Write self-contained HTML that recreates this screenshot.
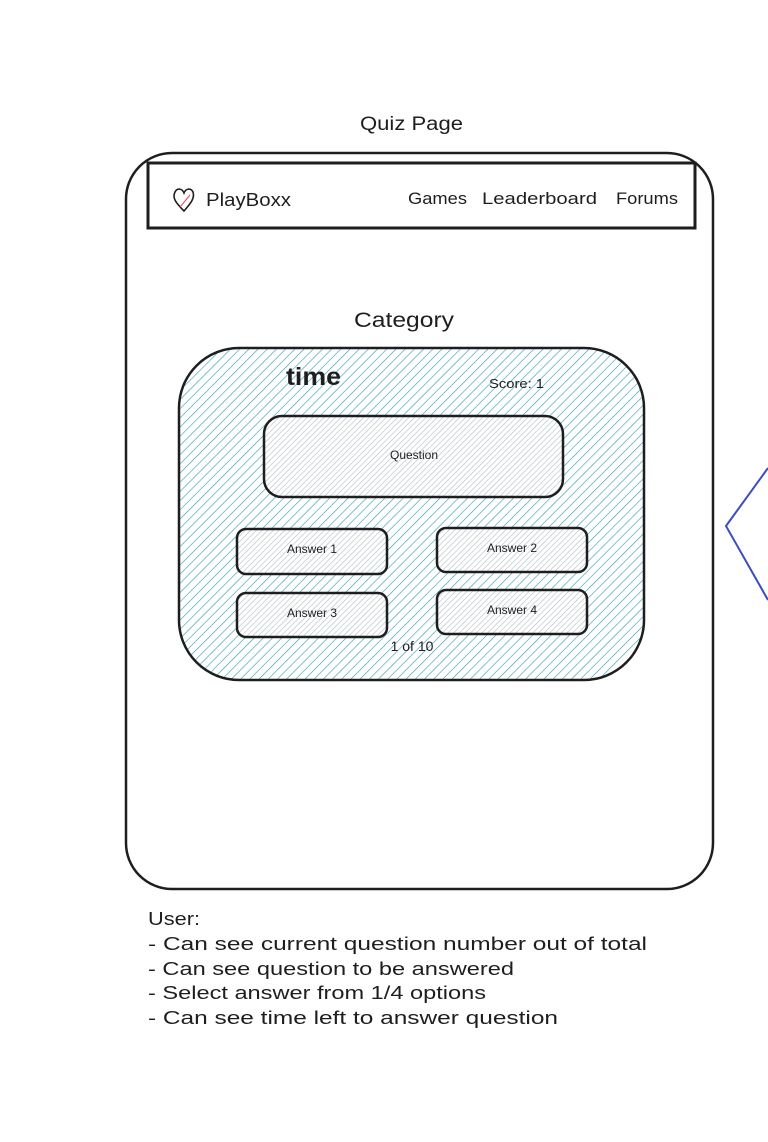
<!DOCTYPE html>
<html><head><meta charset="utf-8"><style>
html,body{margin:0;padding:0;background:#fff;}
svg{display:block;}
text{font-family:"Liberation Sans",sans-serif;fill:#1e1e1e;}
</style></head><body>
<svg width="768" height="1142" viewBox="0 0 768 1142" xmlns="http://www.w3.org/2000/svg">
<defs>
<pattern id="h" width="6.5" height="6.5" patternUnits="userSpaceOnUse" patternTransform="rotate(45)">
<line x1="0" y1="0" x2="0" y2="6.5" stroke="#2a9bb5" stroke-width="1.2"/>
</pattern>
<pattern id="g" width="4" height="4" patternUnits="userSpaceOnUse" patternTransform="rotate(45)">
<line x1="0" y1="0" x2="0" y2="4" stroke="#b0bec3" stroke-width="1.2"/>
</pattern>
</defs>
<text x="360" y="130" font-size="19" textLength="103" lengthAdjust="spacingAndGlyphs">Quiz Page</text>
<rect x="126" y="153" width="587" height="736" rx="46" fill="none" stroke="#1e1e1e" stroke-width="2.5"/>
<rect x="148" y="163" width="547" height="65" fill="#fff" stroke="#1e1e1e" stroke-width="3"/>
<path d="M184 211 C176 203 172 198 175 192 C177 188 182 188 184 193 C186 188 191 188 193 192 C195 198 191 203 184 211Z" fill="none" stroke="#1e1e1e" stroke-width="1.6"/>
<path d="M180 207 L190 195" stroke="#d0506a" stroke-width="1"/>
<text x="206" y="206" font-size="18" textLength="85" lengthAdjust="spacingAndGlyphs">PlayBoxx</text>
<text x="408" y="204" font-size="17" textLength="59" lengthAdjust="spacingAndGlyphs">Games</text>
<text x="482" y="204" font-size="17" textLength="115" lengthAdjust="spacingAndGlyphs">Leaderboard</text>
<text x="616" y="204" font-size="17" textLength="62" lengthAdjust="spacingAndGlyphs">Forums</text>
<text x="354" y="327" font-size="21" textLength="100" lengthAdjust="spacingAndGlyphs">Category</text>
<rect x="179" y="348" width="465" height="332" rx="60" fill="url(#h)" stroke="#1e1e1e" stroke-width="2.5"/>
<text x="286" y="385" font-size="25" font-weight="bold" textLength="55" lengthAdjust="spacingAndGlyphs">time</text>
<text x="489" y="388" font-size="13" textLength="55" lengthAdjust="spacingAndGlyphs">Score: 1</text>
<rect x="264" y="416" width="299" height="81" rx="18" fill="#fff" stroke="none"/>
<rect x="264" y="416" width="299" height="81" rx="18" fill="url(#g)" stroke="#1e1e1e" stroke-width="2.5"/>
<text x="414" y="459" font-size="12" text-anchor="middle">Question</text>
<g font-size="12" text-anchor="middle">
<rect x="237" y="529" width="150" height="45" rx="9" fill="#fff"/><rect x="237" y="529" width="150" height="45" rx="9" fill="url(#g)" stroke="#1e1e1e" stroke-width="2.5"/>
<text x="312" y="553">Answer 1</text>
<rect x="437" y="528" width="150" height="44" rx="9" fill="#fff"/><rect x="437" y="528" width="150" height="44" rx="9" fill="url(#g)" stroke="#1e1e1e" stroke-width="2.5"/>
<text x="512" y="552">Answer 2</text>
<rect x="237" y="593" width="150" height="44" rx="9" fill="#fff"/><rect x="237" y="593" width="150" height="44" rx="9" fill="url(#g)" stroke="#1e1e1e" stroke-width="2.5"/>
<text x="312" y="617">Answer 3</text>
<rect x="437" y="590" width="150" height="44" rx="9" fill="#fff"/><rect x="437" y="590" width="150" height="44" rx="9" fill="url(#g)" stroke="#1e1e1e" stroke-width="2.5"/>
<text x="512" y="614">Answer 4</text>
<text x="412" y="651" font-size="14">1 of 10</text>
</g>
<path d="M768 468 L726 526 L768 600" fill="none" stroke="#3b4ec0" stroke-width="2"/>
<g font-size="18">
<text x="148" y="925" textLength="52" lengthAdjust="spacingAndGlyphs">User:</text>
<text x="148" y="950" textLength="499" lengthAdjust="spacingAndGlyphs">- Can see current question number out of total</text>
<text x="148" y="975" textLength="366" lengthAdjust="spacingAndGlyphs">- Can see question to be answered</text>
<text x="148" y="999" textLength="338" lengthAdjust="spacingAndGlyphs">- Select answer from 1/4 options</text>
<text x="148" y="1024" textLength="410" lengthAdjust="spacingAndGlyphs">- Can see time left to answer question</text>
</g>
</svg>
</body></html>
